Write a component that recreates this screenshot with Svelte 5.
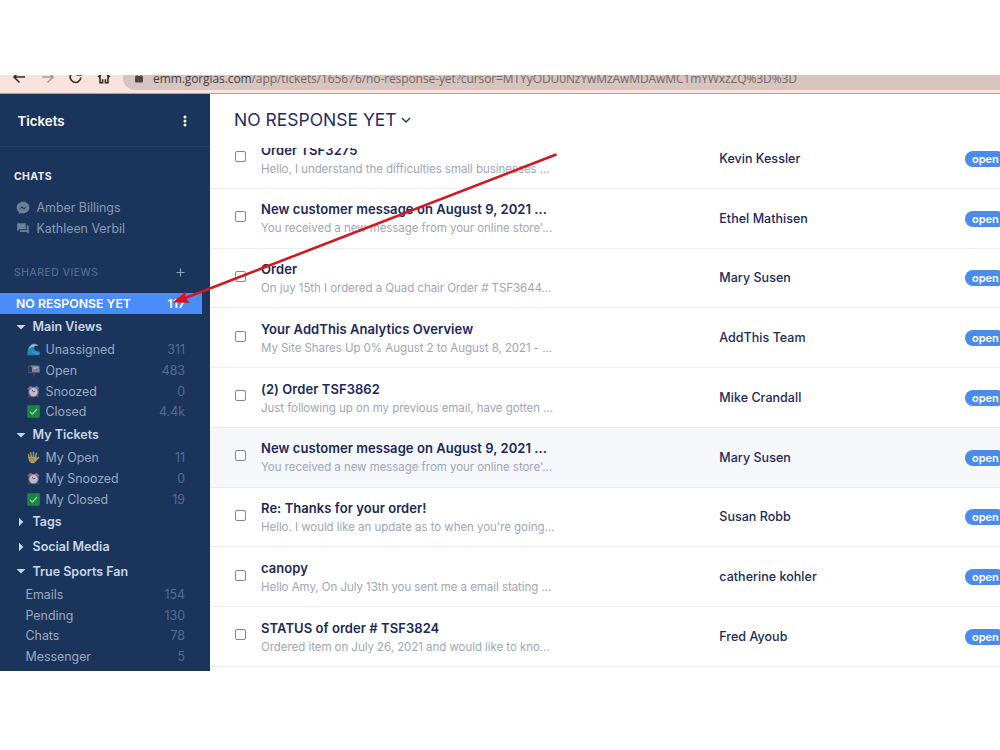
<script>
  const tickets = [
    { subject: 'Order TSF3275', preview: 'Hello, I understand the difficulties small businesses ...', customer: 'Kevin Kessler' },
    { subject: 'New customer message on August 9, 2021 ...', preview: "You received a new message from your online store'...", customer: 'Ethel Mathisen' },
    { subject: 'Order', preview: 'On juy 15th I ordered a Quad chair Order # TSF3644...', customer: 'Mary Susen' },
    { subject: 'Your AddThis Analytics Overview', preview: 'My Site Shares Up 0% August 2 to August 8, 2021 - ...', customer: 'AddThis Team' },
    { subject: '(2) Order TSF3862', preview: 'Just following up on my previous email, have gotten ...', customer: 'Mike Crandall' },
    { subject: 'New customer message on August 9, 2021 ...', preview: "You received a new message from your online store'...", customer: 'Mary Susen', hover: true },
    { subject: 'Re: Thanks for your order!', preview: "Hello. I would like an update as to when you're going...", customer: 'Susan Robb' },
    { subject: 'canopy', preview: 'Hello Amy, On July 13th you sent me a email stating ...', customer: 'catherine kohler' },
    { subject: 'STATUS of order # TSF3824', preview: 'Ordered item on July 26, 2021 and would like to kno...', customer: 'Fred Ayoub' }
  ];

  const sections = [
    { name: 'Main Views', open: true, views: [
      { icon: 'wave', name: 'Unassigned', count: '311' },
      { icon: 'mailbox', name: 'Open', count: '483' },
      { icon: 'clock', name: 'Snoozed', count: '0' },
      { icon: 'check', name: 'Closed', count: '4.4k' }
    ] },
    { name: 'My Tickets', open: true, views: [
      { icon: 'hand', name: 'My Open', count: '11' },
      { icon: 'clock', name: 'My Snoozed', count: '0' },
      { icon: 'check', name: 'My Closed', count: '19' }
    ] },
    { name: 'Tags', open: false, views: [] },
    { name: 'Social Media', open: false, views: [] },
    { name: 'True Sports Fan', open: true, views: [
      { name: 'Emails', count: '154' },
      { name: 'Pending', count: '130' },
      { name: 'Chats', count: '78' },
      { name: 'Messenger', count: '5' }
    ] }
  ];
</script>

{#snippet emoji(kind)}
  <svg class="emoji" viewBox="0 0 13 13" width="13" height="13">
    {#if kind === 'wave'}
      <path d="M.4 12.300C0 8 .8 3.600 4.200 1.400 6.800-.1 10 .5 11.300 3 9.500 2 7.800 2.400 7.300 4c-.6 2.200.8 4.200 5.300 4.600v3.700z" fill="#2585b4" />
      <path d="M1.500 6.500C2.200 3 5 .9 8 1.200c1.600.1 2.700.8 3.300 1.800-2-.9-4-.4-4.500 1.100-.8-.8-3.400-.2-5.300 2.400z" fill="#9fb7cb" />
      <path d="M5 8.500c1.800 1.800 4.500 2.100 7.600 1.500" fill="none" stroke="#62abc9" stroke-width=".8" />
    {:else if kind === 'mailbox'}
      <path d="M1 4.200C1 2.300 2 1.500 3.500 1.500h7.300c1.200 0 1.800.8 1.800 2v5H1z" fill="#7c8799" />
      <path d="M1.200 4.200c0-1.500.7-2.200 1.900-2.200S5 2.900 5 4.300v4H1.200z" fill="#2c3a50" />
      <path d="M6.500 3.300h4.300V5H6.500z" fill="#b2b4c0" />
      <path d="M9 4.300h2.300v1.300H9z" fill="#a65b70" />
      <path d="M6 8.500h2v4H6z" fill="#443e4b" />
    {:else if kind === 'clock'}
      <path d="M1 3.600 3.600 1l1.500 1.500-2.600 2.600zM12 3.600 9.400 1 7.900 2.500l2.600 2.600zM2.600 10.500l-1 1.800M10.400 10.500l1 1.800" fill="#9a7486" stroke="#8c6478" stroke-width="1" />
      <circle cx="6.500" cy="7" r="4.700" fill="#b8bfce" stroke="#8e687c" stroke-width="1.100" />
      <path d="M6.500 7 5 4.900M6.500 7l1.700-1" stroke="#344563" stroke-width=".8" fill="none" />
    {:else if kind === 'check'}
      <rect x=".2" y=".2" width="12.600" height="12.600" rx=".8" fill="#16893f" />
      <path d="m3 6.900 2.300 2.300L10 4" fill="none" stroke="#a5cfb5" stroke-width="1.200" />
    {:else if kind === 'hand'}
      <path d="M2 6.300 1.500 3.500M4.300 5.800 3.700 1.800M6.500 5.800V1.200M8.600 6.300l.8-4M9.200 9l2.500-2.800" stroke="#b09a58" stroke-width="1.400" stroke-linecap="round" />
      <path d="M1.300 5.800h8.100l.6 2.400-2 3.400c-1.300 1.100-3.700 1-4.900-.3C1.900 10 1.500 8 1.300 5.800z" fill="#b09a58" />
      <path d="M3 8c2-.8 3.600-.4 4.200 1.500" fill="none" stroke="#766d50" stroke-width=".7" />
    {/if}
  </svg>
{/snippet}

<div class="page">
  <div class="browser">
    <div class="toolbar">
      <svg class="nav" viewBox="0 0 120 24" width="120" height="24">
        <g fill="none" stroke="#302b2b" stroke-width="1.600">
          <path d="M25 11H14M19.500 5.500 14 11l5.500 5.500" />
          <path d="M42 11h11M47.500 5.500l5.500 5.500-5.500 5.500" stroke="#a59a98" />
          <path d="M79.800 8A5.300 5.300 0 1 0 80.800 11.500M81 4.500V9h-4.500" />
          <path d="m98.200 11 5.800-5.500 5.800 5.500M100 9.500v7.200h2.600M108 9.500v7.200h-2.600M102.600 17.500v-4.300M105.400 17.500v-4.300" />
        </g>
      </svg>
      <div class="address">
        <svg class="lock" viewBox="0 0 8 11" width="8" height="11">
          <path d="M2 5V3a2 2 0 0 1 4 0v2" fill="none" stroke="#4d4846" />
          <rect y="4" width="8" height="6.500" rx="1" fill="#4d4846" />
        </svg>
        <span class="url"><b>emm.gorgias.com</b>/app/tickets/165676/no-response-yet?cursor=MTYyODU0NzYwMzAwMDAwMC1mYWxzZQ%3D%3D</span>
      </div>
    </div>
  </div>

  <div class="app">
    <aside>
      <header class="side-head">
        <span>Tickets</span>
        <svg viewBox="0 0 4 12" width="4" height="12" fill="#fff"><circle cx="2" cy="2" r="1.500" /><circle cx="2" cy="6" r="1.500" /><circle cx="2" cy="10" r="1.500" /></svg>
      </header>
      <h2 class="chats">CHATS</h2>
      <div class="chat">
        <svg viewBox="0 0 14 14" width="14" height="14"><path d="M7 .8C3.400.8.600 3.300.600 6.600c0 1.800.8 3.300 2.100 4.300v2.400l2.200-1.200c.7.200 1.400.3 2.100.3 3.600 0 6.400-2.500 6.400-5.800S10.600.8 7 .8z" fill="#6d7f99" /><path d="m3 8.300 3-3.100L7.900 7 11 5.200 8 8.400 6.200 6.700z" fill="#1a345c" /></svg>
        <span>Amber Billings</span>
      </div>
      <div class="chat">
        <svg viewBox="0 0 14 14" width="14" height="14"><path d="M1.200 1.300h8.600v6H3.500L1.200 9.400z" fill="#6d7f99" /><path d="M10.700 3.500h2v8.600l-2.200-2H4V8.200h6.700z" fill="#6d7f99" /></svg>
        <span>Kathleen Verbil</span>
      </div>
      <div class="shared">
        <span>SHARED VIEWS</span>
        <svg viewBox="0 0 9 9" width="9" height="9"><path d="M4.500.5v8M.5 4.500h8" stroke="#94a3b8" stroke-width="1.200" /></svg>
      </div>
      <div class="active"><span>NO RESPONSE YET</span><span>117</span></div>
      {#each sections as section}
        <div class="section">
          <svg viewBox="0 0 10 10" width="10" height="10"><path d={section.open ? 'M.5 3h9L5 7.500z' : 'M3 .7v8.600L7.300 5z'} fill="#c9d6e6" /></svg>
          <span>{section.name}</span>
        </div>
        {#each section.views as view}
          <div class="view" class:plain={!view.icon}>
            {#if view.icon}{@render emoji(view.icon)}{/if}
            <span class="name">{view.name}</span>
            <span class="count">{view.count}</span>
          </div>
        {/each}
      {/each}
    </aside>

    <main>
      <div class="title">
        <h1>NO RESPONSE YET</h1>
        <svg viewBox="0 0 10 6" width="10" height="6"><path d="m1 1 4 4 4-4" fill="none" stroke="#252c60" stroke-width="1.400" /></svg>
      </div>
      <div class="list">
        {#each tickets as t}
          <div class="row" class:hover={t.hover}>
            <span class="box"></span>
            <div class="text">
              <div class="subject">{t.subject}</div>
              <div class="preview">{t.preview}</div>
            </div>
            <div class="customer">{t.customer}</div>
            <span class="badge">open</span>
          </div>
        {/each}
      </div>
    </main>
  </div>

  <svg class="arrow" viewBox="0 0 1000 750" width="1000" height="750">
    <path d="M555.500 154.800 184 298.500" stroke="#d3181f" stroke-width="2.600" stroke-linecap="round" />
    <path d="m172.500 302.500 13.500-11-1 6.300 5 5z" fill="#e01020" />
  </svg>
</div>

<style>
  :global(body) { background: #fff; }
  .page { position: relative; width: 1000px; height: 750px; overflow: hidden; box-sizing: border-box; padding-top: 75px; font-family: Inter, "Liberation Sans", sans-serif; background: #fff; }
  .browser { height: 19px; box-sizing: border-box; overflow: hidden; background: #f9e3dc; border-bottom: 1px solid #b7a19f; }
  .toolbar { display: flex; height: 24px; margin-top: -9px; }
  .nav { flex: none; }
  .address { flex: 1; height: 24px; margin-left: 3px; background: #d8c5c0; border-radius: 12px 0 0 12px; display: flex; align-items: center; padding-left: 12px; }
  .lock { margin: 0 10px 1px 0; }
  .url { font: 12px/22px "Open Sans", "Noto Sans", sans-serif; letter-spacing: -.09px; color: #756967; white-space: nowrap; margin-top: 1px; }
  .url b { font-weight: 400; color: #453e3d; }
  .app { display: flex; height: 577px; }
  aside { width: 209.500px; flex: none; background: #1a345c; overflow: hidden; box-sizing: border-box; color: #9caabd; font-size: 12.400px; }
  .side-head { height: 53px; box-sizing: border-box; border-bottom: 1px solid #25416a; display: flex; align-items: center; justify-content: space-between; padding: 2px 22.700px 0 17.500px; color: #fff; font-weight: 600; font-size: 13.300px; }
  .chats { margin: 19px 0 10px 14px; font-size: 10.500px; line-height: 21px; font-weight: 700; color: #eaf0f7; letter-spacing: .3px; }
  .chat { height: 21.300px; display: flex; align-items: center; gap: 6.500px; padding-left: 16px; color: #8c9bb2; }
  .shared { height: 22px; margin: 21.500px 25px 9.700px 14px; display: flex; align-items: center; justify-content: space-between; font-size: 10.300px; color: #5f7493; letter-spacing: .6px; }
  .active { width: 202px; height: 21px; box-sizing: border-box; padding: 0 17px 0 16px; display: flex; justify-content: space-between; align-items: center; background: #4a8df8; color: #fff; font-weight: 600; font-size: 12.300px; }
  .section { height: 24.800px; display: flex; align-items: center; gap: 6.500px; padding-left: 16px; font-weight: 600; font-size: 12.500px; color: #c9d6e6; }
  .active + .section { margin-top: .5px; }
  .view { height: 20.800px; display: flex; align-items: center; padding: 0 24.500px 0 27px; }
  .plain { padding-left: 25.500px; }
  .emoji { flex: none; margin-right: 5.500px; }
  .name { flex: 1; }
  .count { color: #566c8d; }
  main { flex: 1; min-width: 0; display: flex; flex-direction: column; }
  .title { height: 54px; flex: none; display: flex; align-items: center; gap: 4.500px; padding: 0 0 3px 24.500px; box-sizing: border-box; }
  h1 { margin: 0; font-size: 17.500px; font-weight: 400; color: #252c60; }
  .list { flex: 1; overflow: hidden; display: flex; flex-direction: column; }
  .row { height: 59.750px; flex: none; box-sizing: border-box; border-bottom: 1px solid #ebeef0; display: flex; align-items: center; padding-left: 25.500px; }
  .row:first-child { margin-top: -19px; }
  .hover { background: #f5f7fb; }
  .box { flex: none; width: 11px; height: 11px; box-sizing: border-box; border: 1px solid #85868c; border-radius: 2px; background: #fff; margin: 0 15px 3px 0; }
  .text { width: 458.300px; flex: none; white-space: nowrap; padding-top: 2.500px; }
  .subject { font-size: 13px; line-height: 19px; font-weight: 600; color: #20285a; letter-spacing: .06px; }
  .preview { font-size: 11.500px; line-height: 19px; color: #a0a6b6; letter-spacing: -.05px; }
  .customer { width: 245.700px; flex: none; font-size: 12.500px; font-weight: 500; color: #20285a; letter-spacing: .03px; }
  .badge { flex: none; width: 40px; height: 16px; box-sizing: border-box; border-radius: 8px; padding-left: 7px; margin-top: 1px; background: #4a8beb; color: #fff; font-size: 11px; line-height: 16px; font-weight: 600; }
  .arrow { position: absolute; left: 0; top: 0; }
</style>
